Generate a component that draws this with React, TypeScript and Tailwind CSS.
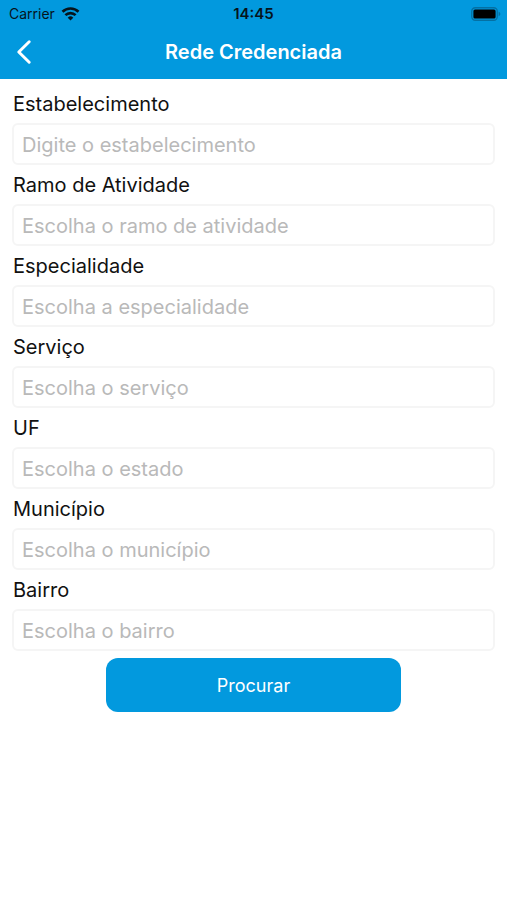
const fields = [
  { id: 'estabelecimento', label: 'Estabelecimento', placeholder: 'Digite o estabelecimento' },
  { id: 'ramo', label: 'Ramo de Atividade', placeholder: 'Escolha o ramo de atividade' },
  { id: 'especialidade', label: 'Especialidade', placeholder: 'Escolha a especialidade' },
  { id: 'servico', label: 'Serviço', placeholder: 'Escolha o serviço' },
  { id: 'uf', label: 'UF', placeholder: 'Escolha o estado' },
  { id: 'municipio', label: 'Município', placeholder: 'Escolha o município' },
  { id: 'bairro', label: 'Bairro', placeholder: 'Escolha o bairro' },
];

function WifiIcon() {
  return (
    <svg width="19" height="14" viewBox="0 0 18 14" fill="none" stroke="#06141c" strokeWidth="2.6" aria-hidden="true">
      <path d="M1 4.8a11.4 11.4 0 0 1 16 0" />
      <path d="M3.9 8.2a7.2 7.2 0 0 1 10.2 0" />
      <path d="M9 13.4 6.2 10.7a4 4 0 0 1 5.6 0Z" fill="#06141c" stroke="none" />
    </svg>
  );
}

function BatteryIcon() {
  return (
    <svg width="30" height="14" viewBox="0 0 30 14" aria-hidden="true">
      <rect x="0.75" y="0.75" width="25.5" height="12.5" rx="3.5" fill="none" stroke="#0470a3" strokeWidth="1.3" />
      <rect x="2.4" y="2.4" width="22.2" height="9.2" rx="1.6" fill="#000" />
      <path d="M27.6 4.8c1.1.4 1.7 1.2 1.7 2.2s-.6 1.8-1.7 2.2Z" fill="#0470a3" />
    </svg>
  );
}

function StatusBar() {
  return (
    <div className="grid grid-cols-3 items-center h-7 px-[6px] text-[#06141c]">
      <div className="flex items-center gap-[6px] pl-[3px] text-sm">
        <span>Carrier</span>
        <WifiIcon />
      </div>
      <span className="text-center text-[15px] font-semibold">14:45</span>
      <div className="flex justify-end">
        <BatteryIcon />
      </div>
    </div>
  );
}

export default function App() {
  return (
    <div className="min-h-screen bg-white font-['Inter',sans-serif]">
      <header className="bg-[#0299de]">
        <StatusBar />
        <div className="grid grid-cols-[48px_1fr_48px] items-center h-[51px] pb-[3px]">
          <button type="button" aria-label="Voltar" className="flex items-center justify-center h-full">
            <svg width="16" height="26" viewBox="0 0 16 26" fill="none" stroke="#fff" strokeWidth="3" strokeLinecap="round" strokeLinejoin="round" aria-hidden="true">
              <path d="M13.2 2.8 2.8 13l10.4 10.2" />
            </svg>
          </button>
          <h1 className="text-center text-xl font-semibold text-white">Rede Credenciada</h1>
        </div>
      </header>

      <main className="px-3 pt-[5px]">
        <form className="flex flex-col">
          {fields.map((field) => (
            <div key={field.id} className="flex flex-col">
              <label htmlFor={field.id} className="pl-px pt-[2px] text-xl leading-[37px] text-[#111111]">
                {field.label}
              </label>
              <input
                id={field.id}
                type="text"
                placeholder={field.placeholder}
                className="w-full h-[42px] px-2 pt-[2px] rounded-md border-2 border-[#f5f5f5] bg-white text-xl text-[#111111] placeholder:text-[#b9b9b9] outline-none"
              />
            </div>
          ))}
          <button
            type="button"
            className="self-center w-[61%] h-[54px] mt-[7px] pt-[2px] rounded-xl bg-[#0299de] text-lg text-white"
          >
            Procurar
          </button>
        </form>
      </main>
    </div>
  );
}
